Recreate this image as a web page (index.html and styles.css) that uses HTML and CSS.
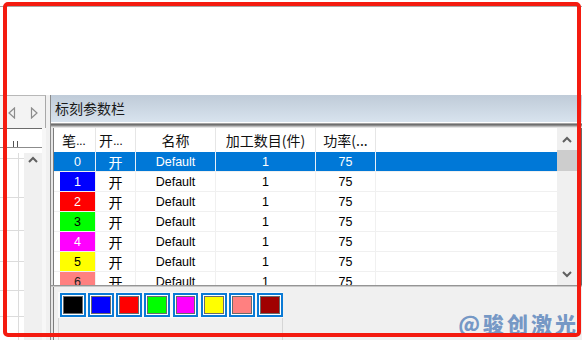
FILE: index.html
```html
<!DOCTYPE html>
<html>
<head>
<meta charset="utf-8">
<link rel="stylesheet" href="styles.css">
</head>
<body>
<div class="screen">
  <div class="top"></div>
  <div class="work">
    <div class="left">
      <div class="tabs">
        <svg width="8" height="12" viewBox="0 0 8 12"><polygon points="6.5,1 1,6 6.5,11" fill="none" stroke="#8c8c8c" stroke-width="1.2"/></svg>
        <svg width="8" height="12" viewBox="0 0 8 12"><polygon points="1.5,1 7,6 1.5,11" fill="none" stroke="#8c8c8c" stroke-width="1.2"/></svg>
      </div>
      <div class="ruler"><div class="ticks"><span></span><span></span></div></div>
      <div class="canvas">
        <div class="cgrid">
          <div class="gl" style="height:6px"></div>
          <div class="gl" style="height:39px"></div>
          <div class="gl" style="height:33px"></div>
          <div class="gl" style="height:31px"></div>
          <div class="gl" style="height:29px"></div>
          <div class="gl" style="height:26px"></div>
        </div>
        <div class="lscroll">
          <div class="btn"><svg width="10" height="7" viewBox="0 0 10 7"><polyline points="1,6 5,2 9,6" fill="none" stroke="#606060" stroke-width="2"/></svg></div>
        </div>
      </div>
    </div>
    <div class="gap"></div>
    <div class="main">
      <div class="title">标刻参数栏</div>
      <div class="sep"></div>
      <div class="body">
        <div class="table">
          <div class="row head">
            <div class="c c0"></div>
            <div class="c c1">笔<span class="dots">...</span></div>
            <div class="c c2">开<span class="dots">...</span></div>
            <div class="c c3">名称</div>
            <div class="c c4">加工数目<span class="par">(</span>件<span class="par">)</span></div>
            <div class="c c5">功率<span class="par">(...</span></div>
            <div class="c cf"></div>
          </div>
          <div class="row sel">
            <div class="c c0"></div><div class="c c1">0</div><div class="c c2 cj">开</div><div class="c c3">Default</div><div class="c c4">1</div><div class="c c5">75</div><div class="c cf"></div>
          </div>
          <div class="row">
            <div class="c c0"></div><div class="c c1 pen" style="background:#0000ff;color:#fff">1</div><div class="c c2 cj">开</div><div class="c c3">Default</div><div class="c c4">1</div><div class="c c5">75</div><div class="c cf"></div>
          </div>
          <div class="row">
            <div class="c c0"></div><div class="c c1 pen" style="background:#ff0000;color:#fff">2</div><div class="c c2 cj">开</div><div class="c c3">Default</div><div class="c c4">1</div><div class="c c5">75</div><div class="c cf"></div>
          </div>
          <div class="row">
            <div class="c c0"></div><div class="c c1 pen" style="background:#00ff00;color:#000">3</div><div class="c c2 cj">开</div><div class="c c3">Default</div><div class="c c4">1</div><div class="c c5">75</div><div class="c cf"></div>
          </div>
          <div class="row">
            <div class="c c0"></div><div class="c c1 pen" style="background:#ff00ff;color:#fff">4</div><div class="c c2 cj">开</div><div class="c c3">Default</div><div class="c c4">1</div><div class="c c5">75</div><div class="c cf"></div>
          </div>
          <div class="row">
            <div class="c c0"></div><div class="c c1 pen" style="background:#ffff00;color:#000">5</div><div class="c c2 cj">开</div><div class="c c3">Default</div><div class="c c4">1</div><div class="c c5">75</div><div class="c cf"></div>
          </div>
          <div class="row">
            <div class="c c0"></div><div class="c c1 pen" style="background:#ff8080;color:#222">6</div><div class="c c2 cj">开</div><div class="c c3">Default</div><div class="c c4">1</div><div class="c c5">75</div><div class="c cf"></div>
          </div>
        </div>
        <div class="rscroll">
          <div class="btn up"><svg width="10" height="7" viewBox="0 0 10 7"><polyline points="1,6 5,2 9,6" fill="none" stroke="#606060" stroke-width="2"/></svg></div>
          <div class="thumb"></div>
          <div class="track"></div>
          <div class="btn down"><svg width="10" height="7" viewBox="0 0 10 7"><polyline points="1,1 5,5 9,1" fill="none" stroke="#606060" stroke-width="2"/></svg></div>
        </div>
        <div class="edge"></div>
      </div>
      <div class="bottom">
        <div class="binner">
          <div class="palette">
            <div class="swatches">
              <div class="sw"><div style="background:#000000"></div></div>
              <div class="sw"><div style="background:#0000ff"></div></div>
              <div class="sw"><div style="background:#ff0000"></div></div>
              <div class="sw"><div style="background:#00ff00"></div></div>
              <div class="sw"><div style="background:#ff00ff"></div></div>
              <div class="sw"><div style="background:#ffff00"></div></div>
              <div class="sw"><div style="background:#ff8080"></div></div>
              <div class="sw"><div style="background:#a00000"></div></div>
            </div>
            <div class="panel"></div>
          </div>
        </div>
      </div>
    </div>
  </div>
  <div class="mark">@骏创激光</div>
  <div class="frame"></div>
</div>
</body>
</html>
```

FILE: styles.css
```css
* { box-sizing: border-box; }
html, body { margin: 0; padding: 0; }
body {
  width: 582px;
  height: 340px;
  overflow: hidden;
  background: #fff;
  font-family: "Liberation Sans", "Noto Sans CJK SC", sans-serif;
}
.screen {
  position: relative;
  width: 582px;
  height: 340px;
  overflow: hidden;
}
.top {
  height: 89px;
  margin-top: 6px;
  border-top: 1px solid #a8a8a8;
  background: #fff;
}
.work {
  display: flex;
  height: 245px;
}
.left {
  width: 46px;
  flex-shrink: 0;
  display: flex;
  flex-direction: column;
  background: #f7f7f7;
}
.tabs {
  height: 33px;
  border-top: 1px solid #b8b8b8;
  border-right: 1px solid #a8a8a8;
  background: #f3f3f3;
  display: flex;
  align-items: center;
  gap: 14px;
  padding-left: 8px;
  padding-top: 2px;
}
.tabs svg { display: block; }
.ruler {
  width: 42px;
  height: 25px;
  background: #fff;
  border-top: 1px solid #6b6b6b;
}
.ticks {
  display: flex;
  gap: 3px;
  padding-left: 13px;
  margin-top: 12px;
  height: 7px;
  border-bottom: 1px solid #8c8c8c;
}
.ticks span {
  width: 1px;
  height: 6px;
  background: #555;
}
.canvas {
  flex: 1;
  display: flex;
  width: 42px;
}
.cgrid {
  width: 24px;
  background: #fff linear-gradient(to right, transparent 18px, #dcdcdc 18px, #dcdcdc 19px, transparent 19px);
  display: flex;
  flex-direction: column;
}
.gl {
  border-bottom: 1px solid #dcdcdc;
}
.lscroll {
  width: 18px;
  background: #f0f0f0;
}
.lscroll .btn {
  height: 13px;
  display: flex;
  align-items: center;
  justify-content: center;
}
.gap {
  width: 4px;
  flex-shrink: 0;
  background: #f0f0f0;
}
.main {
  width: 532px;
  flex-shrink: 0;
  display: flex;
  flex-direction: column;
  border-left: 1px solid #8a8a8a;
  background: #f0f0f0;
}
.title {
  height: 27px;
  line-height: 27px;
  padding-left: 4px;
  font-size: 14px;
  font-family: "Noto Sans CJK SC", sans-serif;
  color: #1a1a1a;
  background: linear-gradient(#bfcbd8, #d8e3ee);
}
.sep {
  height: 6px;
  background: linear-gradient(#ffffff 0, #ffffff 1px, #a5a5a5 1px, #a5a5a5 2px, #6e6e6e 2px, #6e6e6e 3px, #8c8c8c 3px, #8c8c8c 4px, #bcbcbc 4px, #bcbcbc 5px, #e4e4e4 5px);
}
.body {
  height: 158px;
  flex-shrink: 0;
  display: flex;
  padding-left: 2px;
  background: #e6e6e6;
  border-bottom: 1px solid #959595;
}
.table {
  width: 504px;
  flex-shrink: 0;
  height: 157px;
  overflow: hidden;
  background: #fff;
  border-left: 1px solid #7c7c7c;
}
.row {
  display: flex;
  height: 20px;
  border-bottom: 1px solid #f0f0f0;
  font-size: 12.5px;
  color: #000;
}
.row.head {
  height: 24px;
  border-bottom: none;
  font-size: 14px;
  font-family: "Noto Sans CJK SC", sans-serif;
  color: #111;
}
.c {
  height: 100%;
  flex-shrink: 0;
  display: flex;
  align-items: center;
  justify-content: center;
  border-right: 1px solid #f0f0f0;
  white-space: nowrap;
}
.head .c { border-right-color: #e6e6e6; }
.c0 { width: 6px; border-right: none; }
.c1 { width: 36px; }
.c2 { width: 40px; }
.c3 { width: 80px; }
.c4 { width: 100px; }
.c5 { width: 60px; }
.cf { flex: 1; border-right: none; }
.cj {
  font-family: "Noto Sans CJK SC", sans-serif;
  font-size: 14px;
}
.dots {
  font-family: "Liberation Sans", sans-serif;
  font-size: 13px;
  letter-spacing: -0.5px;
}
.par {
  font-family: "Noto Sans CJK SC", sans-serif;
}
.head .c1 { justify-content: flex-start; padding-left: 2px; }
.head .c2 { justify-content: flex-start; padding-left: 3px; }
.row.sel { background: #0078d7; color: #fff; }
.row.sel .c { border-right-color: #e8f0f8; }
.rscroll {
  width: 20px;
  flex-shrink: 0;
  height: 157px;
  background: #f0f0f0;
  display: flex;
  flex-direction: column;
}
.rscroll .btn {
  height: 22px;
  display: flex;
  align-items: center;
  justify-content: center;
}
.rscroll .thumb {
  height: 21px;
  background: #cdcdcd;
}
.rscroll .track { flex: 1; }
.edge {
  width: 5px;
  flex-shrink: 0;
  background: #6a6a6a;
}
.bottom {
  flex: 1;
  padding-left: 2px;
  background: #e6e6e6;
  border-top: 1px solid #c8c8c8;
  display: flex;
}
.binner {
  flex: 1;
  border-left: 1px solid #7c7c7c;
  background: #f0f0f0;
  padding: 5px 0 0 4px;
}
.palette {
  width: 225px;
  height: 100%;
  display: flex;
  flex-direction: column;
}
.swatches {
  height: 26px;
  background: #f9f9f9;
  display: flex;
  gap: 2.3px;
  padding: 1px 0 1px 2px;
}
.sw {
  width: 26px;
  height: 24px;
  border: 2px solid #0a7ad5;
  padding: 1px;
  background: #fff;
}
.sw div {
  width: 100%;
  height: 100%;
  border: 1px solid #6a6a6a;
}
.panel {
  flex: 1;
  border-left: 1px solid #d6d6d6;
  border-right: 1px solid #d6d6d6;
}
.mark {
  position: absolute;
  right: 3px;
  top: 310px;
  font-family: "Noto Sans CJK SC", sans-serif;
  font-weight: 900;
  font-size: 21px;
  line-height: 26px;
  letter-spacing: 3px;
  color: rgba(96, 136, 190, 0.85);
}
.frame {
  position: absolute;
  left: 3px;
  top: 2px;
  width: 578px;
  height: 335px;
  border: 4px solid #f41b10;
  border-radius: 5px;
}
```
